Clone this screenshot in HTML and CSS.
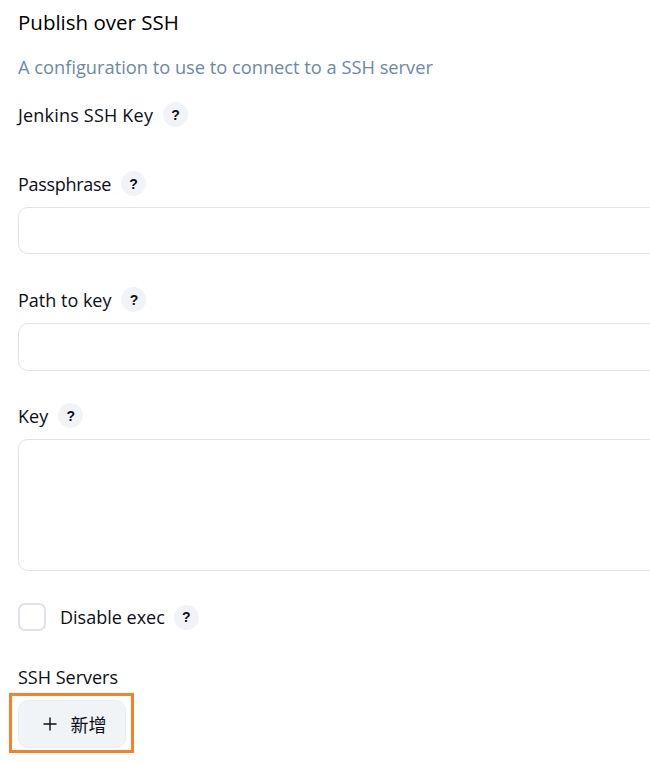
FILE: index.html
```html
<!DOCTYPE html>
<html lang="en">
<head>
  <meta charset="UTF-8">
  <meta name="viewport" content="width=device-width, initial-scale=1.0">
  <title>Publish over SSH</title>
  <link rel="stylesheet" href="styles.css">
</head>
<body>
  <div class="form">
    <h2 class="title">Publish over SSH</h2>
    <p class="desc">A configuration to use to connect to a SSH server</p>

    <div class="field field-key">
      <div class="label-row"><span class="label-wide">Jenkins SSH Key</span><a class="help">?</a></div>
    </div>

    <div class="field">
      <div class="label-row"><span class="label-tight">Passphrase</span><a class="help">?</a></div>
      <input class="input" type="password">
    </div>

    <div class="field field-path">
      <div class="label-row"><span>Path to key</span><a class="help">?</a></div>
      <input class="input" type="text">
    </div>

    <div class="field">
      <div class="label-row"><span>Key</span><a class="help">?</a></div>
      <textarea class="input area"></textarea>
    </div>

    <div class="check-row">
      <span class="check"></span>
      <span>Disable exec</span>
      <a class="help">?</a>
    </div>

    <div class="servers">
      <div class="servers-label">SSH Servers</div>
      <div class="highlight">
        <button class="add">
          <svg width="14" height="14" viewBox="0 0 14 14"><path d="M7 0.5V13.5M0.5 7H13.5" stroke="#0d0d17" stroke-width="1.4" fill="none"/></svg>
          <span>新增</span>
        </button>
      </div>
    </div>
  </div>
</body>
</html>
```

FILE: styles.css
```css
html, body {
  margin: 0;
  background: #fff;
  overflow: hidden;
}

body {
  font-family: "Open Sans", "Noto Sans CJK SC", sans-serif;
  font-size: 18px;
  color: #0d0d17;
}

.form {
  width: 680px;
  height: 763px;
  padding: 9px 0 0 18px;
  box-sizing: border-box;
}

.title {
  margin: 0;
  font-size: 20.5px;
  font-weight: 400;
  line-height: 26px;
  color: #000;
}

.desc {
  margin: 19px 0 0;
  font-size: 18.25px;
  line-height: 26px;
  color: #6d87ab;
}

.field {
  margin-bottom: 33px;
}

.field-key {
  margin: 22px 0 44px;
}

.field-path {
  margin-bottom: 32px;
}

.field-path .input {
  height: 48px;
}

.label-row {
  display: flex;
  align-items: center;
  gap: 10px;
  height: 25px;
  margin-bottom: 11px;
}

.label-wide {
  letter-spacing: 0.2px;
}

.label-tight {
  letter-spacing: -0.3px;
}

.help {
  width: 25px;
  height: 25px;
  border-radius: 50%;
  background: #f1f3f6;
  display: flex;
  align-items: center;
  justify-content: center;
  font-size: 14px;
  font-weight: 700;
  font-family: "Liberation Sans", sans-serif;
}

.input {
  display: block;
  width: 100%;
  height: 47px;
  box-sizing: border-box;
  border: 1px solid #dfe2ee;
  border-radius: 10px;
  background: #fff;
  padding: 0 12px;
  resize: none;
}

.area {
  height: 132px;
}

.check-row {
  display: flex;
  align-items: center;
  height: 28px;
  margin-top: -1px;
}

.check {
  width: 28px;
  height: 28px;
  box-sizing: border-box;
  border: 2px solid #dfe2ee;
  border-radius: 7px;
  margin-right: 14px;
}

.check-row .help {
  margin-left: 9px;
}

.servers {
  margin-top: 33px;
}

.servers-label {
  line-height: 26px;
}

.highlight {
  width: 125px;
  height: 60px;
  margin: 3px 0 0 -9px;
  padding: 4px 5px 5px 6px;
  box-sizing: border-box;
  border: 3px solid #f5822a;
}

.add {
  width: 108px;
  height: 48px;
  display: flex;
  align-items: center;
  justify-content: center;
  gap: 14px;
  border: 1px solid #e9ecf1;
  border-radius: 10px;
  background: #f1f4f7;
  color: #0d0d17;
  font: inherit;
  padding: 0 0 0 5px;
}
```
